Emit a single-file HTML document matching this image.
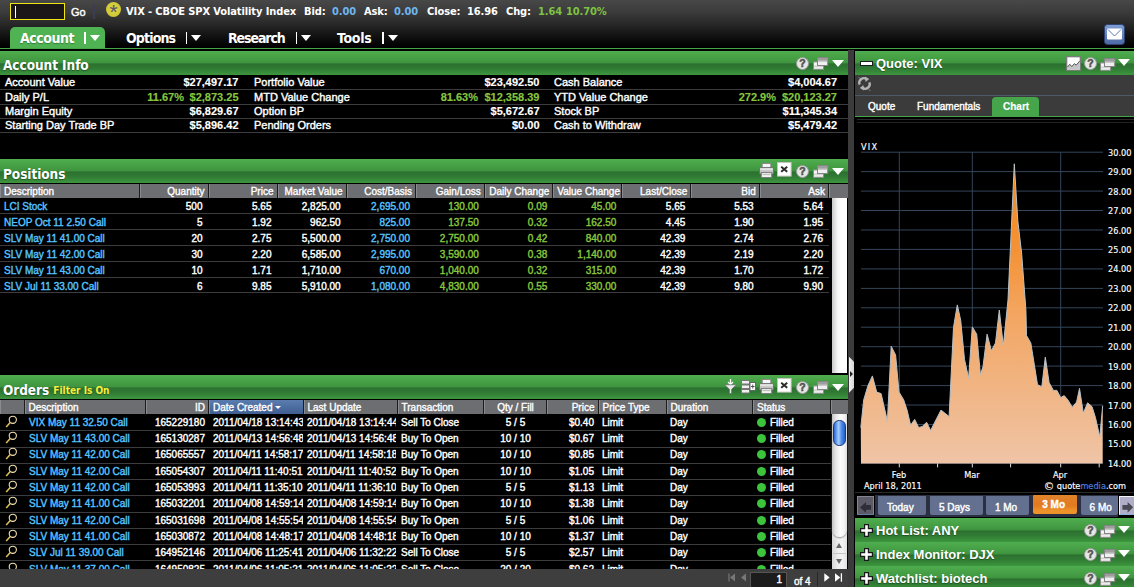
<!DOCTYPE html>
<html lang="en"><head><meta charset="utf-8"><title>Account</title>
<style>
*{margin:0;padding:0;box-sizing:border-box}
html,body{width:1134px;height:587px;overflow:hidden;background:#000}
body{position:relative;font-family:"Liberation Sans",sans-serif;font-size:11px;color:#fff;line-height:1}
.a{position:absolute;white-space:nowrap}
.t{position:absolute;white-space:nowrap;font-size:11px;line-height:14px;-webkit-text-stroke:0.4px currentColor}
.s{font-size:10px}
.b{font-weight:bold;-webkit-text-stroke-width:0.15px}
.r{text-align:right}
.g{color:#87c63f}
.bl{color:#55c2ff}
.hdr{position:absolute;height:24px;background:linear-gradient(#4fae4f 0%,#47a146 25%,#3f953f 49%,#2c7030 54%,#2f7a33 72%,#3d963e 100%)}
.ht{position:absolute;left:3px;top:5.5px;letter-spacing:-.05px;font-family:"DejaVu Sans Condensed","Liberation Sans",sans-serif;font-weight:bold;font-size:13.5px;line-height:18px;color:#fff;white-space:nowrap;text-shadow:0 1px 1px rgba(0,0,0,.35)}
.rh{position:absolute;font-weight:bold;font-size:13px;line-height:18px;color:#fff;white-space:nowrap;text-shadow:0 1px 1px rgba(0,0,0,.35)}
.ln{position:absolute;height:1px;background:#3c3c3c}
.ch{position:absolute;height:14px;background:#6d6e71;border-right:1px solid #1c1c1c;border-left:1px solid #8a8b8e;font-size:10px;line-height:15px;color:#fff;white-space:nowrap;overflow:hidden;-webkit-text-stroke:0.35px #fff}
svg{position:absolute;overflow:visible}
</style></head>
<body>
<div class="a" style="left:0;top:0;width:1134px;height:48px;background:linear-gradient(#484848 0,#3b3b3b 12px,#282828 24px,#151515 34px,#060606 43px,#000 48px)"></div>
<div class="a" style="left:10px;top:3px;width:55px;height:17px;border:1.3px solid #efe614;background:#1b1718"></div>
<div class="a" style="left:15px;top:6px;width:1px;height:12px;background:#fff"></div>
<div class="t" style="left:71px;top:4.5px;font-size:11px">Go</div>
<div class="a" style="left:93.2px;top:3.7px;width:1.8px;height:15px;background:#3c3c54"></div>
<div class="a" style="left:106px;top:2px;width:15.2px;height:15.2px;border-radius:8px;background:radial-gradient(circle at 50% 45%,#ddd644,#d2ca38 60%,#b9b12c)"></div>
<svg style="left:106px;top:2px" width="16" height="16" viewBox="0 0 16 16"><text x="7.7" y="17.1" text-anchor="middle" font-family="Liberation Sans,sans-serif" font-size="21" fill="#56566c">*</text></svg>
<div class="a" style="left:126px;top:4.7px;font-family:'DejaVu Sans Condensed','Liberation Sans',sans-serif;font-weight:bold;font-size:11px;letter-spacing:-0.1px;line-height:14px">VIX - CBOE SPX Volatility Index</div>
<div class="a" style="left:304px;top:4.7px;font-family:'DejaVu Sans Condensed','Liberation Sans',sans-serif;font-weight:bold;font-size:11px;letter-spacing:-0.1px;line-height:14px">Bid:</div>
<div class="a" style="left:332px;top:4.7px;font-family:'DejaVu Sans Condensed','Liberation Sans',sans-serif;font-weight:bold;font-size:11px;letter-spacing:-0.1px;line-height:14px;color:#6fb6f2">0.00</div>
<div class="a" style="left:364px;top:4.7px;font-family:'DejaVu Sans Condensed','Liberation Sans',sans-serif;font-weight:bold;font-size:11px;letter-spacing:-0.1px;line-height:14px">Ask:</div>
<div class="a" style="left:394px;top:4.7px;font-family:'DejaVu Sans Condensed','Liberation Sans',sans-serif;font-weight:bold;font-size:11px;letter-spacing:-0.1px;line-height:14px;color:#6fb6f2">0.00</div>
<div class="a" style="left:427px;top:4.7px;font-family:'DejaVu Sans Condensed','Liberation Sans',sans-serif;font-weight:bold;font-size:11px;letter-spacing:-0.1px;line-height:14px">Close:</div>
<div class="a" style="left:467px;top:4.7px;font-family:'DejaVu Sans Condensed','Liberation Sans',sans-serif;font-weight:bold;font-size:11px;letter-spacing:-0.1px;line-height:14px">16.96</div>
<div class="a" style="left:506px;top:4.7px;font-family:'DejaVu Sans Condensed','Liberation Sans',sans-serif;font-weight:bold;font-size:11px;letter-spacing:-0.1px;line-height:14px">Chg:</div>
<div class="a" style="left:538px;top:4.7px;font-family:'DejaVu Sans Condensed','Liberation Sans',sans-serif;font-weight:bold;font-size:11px;letter-spacing:-0.1px;line-height:14px;color:#7dc242">1.64</div>
<div class="a" style="left:566px;top:4.7px;font-family:'DejaVu Sans Condensed','Liberation Sans',sans-serif;font-weight:bold;font-size:11px;letter-spacing:-0.1px;line-height:14px;color:#7dc242">10.70%</div>
<div class="a" style="left:10px;top:27px;width:95px;height:22px;background:#4fb354;border-radius:5px 5px 0 0"></div>
<div class="a" style="left:20px;top:29px;font-family:'DejaVu Sans Condensed','Liberation Sans',sans-serif;font-weight:bold;font-size:14px;letter-spacing:-.5px;line-height:18px;text-shadow:0 1px 1px rgba(0,0,0,.3);letter-spacing:-0.45px">Account</div>
<div class="a" style="left:84px;top:31.5px;width:1.6px;height:12px;background:#fff"></div>
<div class="a" style="left:89.5px;top:35px;width:0;height:0;border-left:5px solid transparent;border-right:5px solid transparent;border-top:6px solid #fff"></div>
<div class="a" style="left:126px;top:29px;font-family:'DejaVu Sans Condensed','Liberation Sans',sans-serif;font-weight:bold;font-size:14px;letter-spacing:-.5px;line-height:18px;text-shadow:0 1px 1px rgba(0,0,0,.3);letter-spacing:-0.85px">Options</div>
<div class="a" style="left:185.5px;top:31.5px;width:1.6px;height:12px;background:#fff"></div>
<div class="a" style="left:191px;top:35px;width:0;height:0;border-left:5px solid transparent;border-right:5px solid transparent;border-top:6px solid #fff"></div>
<div class="a" style="left:228px;top:29px;font-family:'DejaVu Sans Condensed','Liberation Sans',sans-serif;font-weight:bold;font-size:14px;letter-spacing:-.5px;line-height:18px;text-shadow:0 1px 1px rgba(0,0,0,.3);letter-spacing:-1.1px">Research</div>
<div class="a" style="left:295.5px;top:31.5px;width:1.6px;height:12px;background:#fff"></div>
<div class="a" style="left:301px;top:35px;width:0;height:0;border-left:5px solid transparent;border-right:5px solid transparent;border-top:6px solid #fff"></div>
<div class="a" style="left:337px;top:29px;font-family:'DejaVu Sans Condensed','Liberation Sans',sans-serif;font-weight:bold;font-size:14px;letter-spacing:-.5px;line-height:18px;text-shadow:0 1px 1px rgba(0,0,0,.3);letter-spacing:-0.3px">Tools</div>
<div class="a" style="left:382px;top:31.5px;width:1.6px;height:12px;background:#fff"></div>
<div class="a" style="left:387.5px;top:35px;width:0;height:0;border-left:5px solid transparent;border-right:5px solid transparent;border-top:6px solid #fff"></div>
<div class="a" style="left:0;top:47.7px;width:1134px;height:1.5px;background:#46a44a"></div>
<svg style="left:1104px;top:24px" width="21" height="21" viewBox="0 0 21 21"><defs><linearGradient id="mg" x1="0" y1="0" x2="0" y2="1"><stop offset="0" stop-color="#7f9fd3"/><stop offset="1" stop-color="#4a69a6"/></linearGradient></defs><rect x="0.5" y="0.5" width="20" height="20" rx="3" fill="url(#mg)" stroke="#2d4270"/><rect x="3" y="4.5" width="15" height="11" rx="1" fill="#fff"/><path d="M4 5.5 L10.5 12 L17 5.5" fill="none" stroke="#5877b4" stroke-width="1"/></svg>
<div class="hdr" style="left:0;top:50.75px;height:24.25px;width:848px"><div class="ht" style="top:5px">Account Info</div></div>
<svg style="left:796px;top:57px" width="13" height="13" viewBox="0 0 13 13"><circle cx="6.5" cy="6.5" r="6" fill="#e6e6e6" stroke="#9a9a9a" stroke-width="1"/><text x="6.5" y="10" text-anchor="middle" font-family="Liberation Sans,sans-serif" font-weight="bold" font-size="10.5" fill="#505050" stroke="#505050" stroke-width=".5">?</text></svg>
<svg style="left:813px;top:56.5px" width="16" height="13" viewBox="0 0 16 13"><rect x="0.5" y="4.9" width="10" height="7.4" fill="#f4f4f4" stroke="#8c8c8c"/><rect x="1" y="8.6" width="9" height="1.6" fill="#d0d0d0"/><rect x="4.5" y="0.5" width="10.2" height="8" fill="#f0f0f0" stroke="#858585"/><rect x="5" y="1" width="9.2" height="2.8" fill="#9e9e9e"/><rect x="5" y="3.8" width="9.2" height="1.2" fill="#c8c8c8"/></svg>
<div class="a" style="left:832.4px;top:60.1px;width:0;height:0;border-left:6.1px solid transparent;border-right:6.1px solid transparent;border-top:7.6px solid #fff"></div>
<div class="t" style="left:5px;top:75px">Account Value</div>
<div class="t b r" style="left:138.5px;width:100px;top:75px">$27,497.17</div>
<div class="t" style="left:254px;top:75px">Portfolio Value</div>
<div class="t b r" style="left:439.5px;width:100px;top:75px">$23,492.50</div>
<div class="t" style="left:554px;top:75px">Cash Balance</div>
<div class="t b r" style="left:737px;width:100px;top:75px">$4,004.67</div>
<div class="ln" style="left:0;top:89px;width:848px"></div>
<div class="t" style="left:5px;top:90px">Daily P/L</div>
<div class="t b r g" style="left:138.5px;width:100px;top:90px">$2,873.25</div>
<div class="t b r g" style="left:124px;width:60px;top:90px">11.67%</div>
<div class="t" style="left:254px;top:90px">MTD Value Change</div>
<div class="t b r g" style="left:439.5px;width:100px;top:90px">$12,358.39</div>
<div class="t b r g" style="left:418px;width:60px;top:90px">81.63%</div>
<div class="t" style="left:554px;top:90px">YTD Value Change</div>
<div class="t b r g" style="left:737px;width:100px;top:90px">$20,123.27</div>
<div class="t b r g" style="left:716px;width:60px;top:90px">272.9%</div>
<div class="ln" style="left:0;top:104px;width:848px"></div>
<div class="t" style="left:5px;top:104px">Margin Equity</div>
<div class="t b r" style="left:138.5px;width:100px;top:104px">$6,829.67</div>
<div class="t" style="left:254px;top:104px">Option BP</div>
<div class="t b r" style="left:439.5px;width:100px;top:104px">$5,672.67</div>
<div class="t" style="left:554px;top:104px">Stock BP</div>
<div class="t b r" style="left:737px;width:100px;top:104px">$11,345.34</div>
<div class="ln" style="left:0;top:118px;width:848px"></div>
<div class="t" style="left:5px;top:118px">Starting Day Trade BP</div>
<div class="t b r" style="left:138.5px;width:100px;top:118px">$5,896.42</div>
<div class="t" style="left:254px;top:118px">Pending Orders</div>
<div class="t b r" style="left:439.5px;width:100px;top:118px">$0.00</div>
<div class="t" style="left:554px;top:118px">Cash to Withdraw</div>
<div class="t b r" style="left:737px;width:100px;top:118px">$5,479.42</div>
<div class="ln" style="left:0;top:132px;width:848px"></div>
<div class="hdr" style="left:0;top:159px;width:848px"><div class="ht">Positions</div></div>
<svg style="left:758.7px;top:163.2px" width="15" height="15" viewBox="0 0 15 15"><rect x="3.2" y="0.5" width="8.6" height="5" fill="#f6f6f6" stroke="#8a8a8a"/><rect x="0.5" y="4.6" width="14" height="6.4" rx="1.2" fill="#c4c4c4" stroke="#6f6f6f"/><rect x="1.2" y="5.2" width="12.6" height="2" fill="#e3e3e3"/><rect x="2.3" y="9.6" width="10.4" height="4.9" fill="#f2f2f2" stroke="#7c7c7c"/><path d="M3.5 11.6 H11.5" stroke="#aaa" stroke-width=".8"/></svg>
<svg style="left:776.9px;top:162.1px" width="15" height="15" viewBox="0 0 15 15"><rect x="0.5" y="0.5" width="13.6" height="13.6" fill="#fff" stroke="#c4c4c4"/><path d="M4.2 4.8 L10.2 9.8 M10.2 4.8 L4.2 9.8" stroke="#2c2c2c" stroke-width="2"/></svg>
<svg style="left:796px;top:165px" width="13" height="13" viewBox="0 0 13 13"><circle cx="6.5" cy="6.5" r="6" fill="#e6e6e6" stroke="#9a9a9a" stroke-width="1"/><text x="6.5" y="10" text-anchor="middle" font-family="Liberation Sans,sans-serif" font-weight="bold" font-size="10.5" fill="#505050" stroke="#505050" stroke-width=".5">?</text></svg>
<svg style="left:813px;top:164.5px" width="16" height="13" viewBox="0 0 16 13"><rect x="0.5" y="4.9" width="10" height="7.4" fill="#f4f4f4" stroke="#8c8c8c"/><rect x="1" y="8.6" width="9" height="1.6" fill="#d0d0d0"/><rect x="4.5" y="0.5" width="10.2" height="8" fill="#f0f0f0" stroke="#858585"/><rect x="5" y="1" width="9.2" height="2.8" fill="#9e9e9e"/><rect x="5" y="3.8" width="9.2" height="1.2" fill="#c8c8c8"/></svg>
<div class="a" style="left:832.4px;top:168.1px;width:0;height:0;border-left:6.1px solid transparent;border-right:6.1px solid transparent;border-top:7.6px solid #fff"></div>
<div class="ch" style="left:0px;top:184px;width:139.5px;text-align:left;padding:0 3px 0 3px">Description</div>
<div class="ch" style="left:139.5px;top:184px;width:69px;text-align:right;padding:0 3px 0 3px">Quantity</div>
<div class="ch" style="left:208.5px;top:184px;width:69px;text-align:right;padding:0 3px 0 3px">Price</div>
<div class="ch" style="left:277.5px;top:184px;width:69.2px;text-align:right;padding:0 3px 0 3px">Market Value</div>
<div class="ch" style="left:346.7px;top:184px;width:69.3px;text-align:right;padding:0 3px 0 3px">Cost/Basis</div>
<div class="ch" style="left:416px;top:184px;width:68.8px;text-align:right;padding:0 3px 0 3px">Gain/Loss</div>
<div class="ch" style="left:484.8px;top:184px;width:68.5px;text-align:right;padding:0 3px 0 3px">Daily Change</div>
<div class="ch" style="left:553.3px;top:184px;width:69px;text-align:right;padding:0 3px 0 3px">Value Change</div>
<div class="ch" style="left:622.3px;top:184px;width:69px;text-align:right;padding:0 3px 0 3px">Last/Close</div>
<div class="ch" style="left:691.3px;top:184px;width:68.4px;text-align:right;padding:0 3px 0 3px">Bid</div>
<div class="ch" style="left:759.7px;top:184px;width:69.3px;text-align:right;padding:0 3px 0 3px">Ask</div>
<div class="ch" style="left:829px;top:184px;width:19px;border-right:0"></div>
<div class="t s bl" style="left:4px;top:200.2px">LCI Stock</div>
<div class="t s r " style="left:122.5px;width:80px;top:200.2px">500</div>
<div class="t s r " style="left:191.5px;width:80px;top:200.2px">5.65</div>
<div class="t s r " style="left:260.7px;width:80px;top:200.2px">2,825.00</div>
<div class="t s r bl" style="left:330px;width:80px;top:200.2px">2,695.00</div>
<div class="t s r g" style="left:398.8px;width:80px;top:200.2px">130.00</div>
<div class="t s r g" style="left:467.3px;width:80px;top:200.2px">0.09</div>
<div class="t s r g" style="left:536.3px;width:80px;top:200.2px">45.00</div>
<div class="t s r " style="left:605.3px;width:80px;top:200.2px">5.65</div>
<div class="t s r " style="left:673.7px;width:80px;top:200.2px">5.53</div>
<div class="t s r " style="left:743px;width:80px;top:200.2px">5.64</div>
<div class="ln" style="left:0;top:213px;width:829px"></div>
<div class="t s bl" style="left:4px;top:216.1px">NEOP Oct 11 2.50 Call</div>
<div class="t s r " style="left:122.5px;width:80px;top:216.1px">5</div>
<div class="t s r " style="left:191.5px;width:80px;top:216.1px">1.92</div>
<div class="t s r " style="left:260.7px;width:80px;top:216.1px">962.50</div>
<div class="t s r bl" style="left:330px;width:80px;top:216.1px">825.00</div>
<div class="t s r g" style="left:398.8px;width:80px;top:216.1px">137.50</div>
<div class="t s r g" style="left:467.3px;width:80px;top:216.1px">0.32</div>
<div class="t s r g" style="left:536.3px;width:80px;top:216.1px">162.50</div>
<div class="t s r " style="left:605.3px;width:80px;top:216.1px">4.45</div>
<div class="t s r " style="left:673.7px;width:80px;top:216.1px">1.90</div>
<div class="t s r " style="left:743px;width:80px;top:216.1px">1.95</div>
<div class="ln" style="left:0;top:229px;width:829px"></div>
<div class="t s bl" style="left:4px;top:232px">SLV May 11 41.00 Call</div>
<div class="t s r " style="left:122.5px;width:80px;top:232px">20</div>
<div class="t s r " style="left:191.5px;width:80px;top:232px">2.75</div>
<div class="t s r " style="left:260.7px;width:80px;top:232px">5,500.00</div>
<div class="t s r bl" style="left:330px;width:80px;top:232px">2,750.00</div>
<div class="t s r g" style="left:398.8px;width:80px;top:232px">2,750.00</div>
<div class="t s r g" style="left:467.3px;width:80px;top:232px">0.42</div>
<div class="t s r g" style="left:536.3px;width:80px;top:232px">840.00</div>
<div class="t s r " style="left:605.3px;width:80px;top:232px">42.39</div>
<div class="t s r " style="left:673.7px;width:80px;top:232px">2.74</div>
<div class="t s r " style="left:743px;width:80px;top:232px">2.76</div>
<div class="ln" style="left:0;top:245px;width:829px"></div>
<div class="t s bl" style="left:4px;top:247.9px">SLV May 11 42.00 Call</div>
<div class="t s r " style="left:122.5px;width:80px;top:247.9px">30</div>
<div class="t s r " style="left:191.5px;width:80px;top:247.9px">2.20</div>
<div class="t s r " style="left:260.7px;width:80px;top:247.9px">6,585.00</div>
<div class="t s r bl" style="left:330px;width:80px;top:247.9px">2,995.00</div>
<div class="t s r g" style="left:398.8px;width:80px;top:247.9px">3,590.00</div>
<div class="t s r g" style="left:467.3px;width:80px;top:247.9px">0.38</div>
<div class="t s r g" style="left:536.3px;width:80px;top:247.9px">1,140.00</div>
<div class="t s r " style="left:605.3px;width:80px;top:247.9px">42.39</div>
<div class="t s r " style="left:673.7px;width:80px;top:247.9px">2.19</div>
<div class="t s r " style="left:743px;width:80px;top:247.9px">2.20</div>
<div class="ln" style="left:0;top:261px;width:829px"></div>
<div class="t s bl" style="left:4px;top:263.8px">SLV May 11 43.00 Call</div>
<div class="t s r " style="left:122.5px;width:80px;top:263.8px">10</div>
<div class="t s r " style="left:191.5px;width:80px;top:263.8px">1.71</div>
<div class="t s r " style="left:260.7px;width:80px;top:263.8px">1,710.00</div>
<div class="t s r bl" style="left:330px;width:80px;top:263.8px">670.00</div>
<div class="t s r g" style="left:398.8px;width:80px;top:263.8px">1,040.00</div>
<div class="t s r g" style="left:467.3px;width:80px;top:263.8px">0.32</div>
<div class="t s r g" style="left:536.3px;width:80px;top:263.8px">315.00</div>
<div class="t s r " style="left:605.3px;width:80px;top:263.8px">42.39</div>
<div class="t s r " style="left:673.7px;width:80px;top:263.8px">1.70</div>
<div class="t s r " style="left:743px;width:80px;top:263.8px">1.72</div>
<div class="ln" style="left:0;top:277px;width:829px"></div>
<div class="t s bl" style="left:4px;top:279.7px">SLV Jul 11 33.00 Call</div>
<div class="t s r " style="left:122.5px;width:80px;top:279.7px">6</div>
<div class="t s r " style="left:191.5px;width:80px;top:279.7px">9.85</div>
<div class="t s r " style="left:260.7px;width:80px;top:279.7px">5,910.00</div>
<div class="t s r bl" style="left:330px;width:80px;top:279.7px">1,080.00</div>
<div class="t s r g" style="left:398.8px;width:80px;top:279.7px">4,830.00</div>
<div class="t s r g" style="left:467.3px;width:80px;top:279.7px">0.55</div>
<div class="t s r g" style="left:536.3px;width:80px;top:279.7px">330.00</div>
<div class="t s r " style="left:605.3px;width:80px;top:279.7px">42.39</div>
<div class="t s r " style="left:673.7px;width:80px;top:279.7px">9.80</div>
<div class="t s r " style="left:743px;width:80px;top:279.7px">9.90</div>
<div class="ln" style="left:0;top:292px;width:829px"></div>
<div class="a" style="left:832px;top:198px;width:15px;height:175px;background:linear-gradient(90deg,#c8c8c8,#f4f4f4 35%,#fff 60%,#fff)"></div>
<div class="hdr" style="left:0;top:375px;width:848px"><div class="ht">Orders <span style="font-size:10px;letter-spacing:0;color:#f5ef3c;position:relative;top:-0.5px;left:0px">Filter Is On</span></div></div>
<svg style="left:758.7px;top:379.2px" width="15" height="15" viewBox="0 0 15 15"><rect x="3.2" y="0.5" width="8.6" height="5" fill="#f6f6f6" stroke="#8a8a8a"/><rect x="0.5" y="4.6" width="14" height="6.4" rx="1.2" fill="#c4c4c4" stroke="#6f6f6f"/><rect x="1.2" y="5.2" width="12.6" height="2" fill="#e3e3e3"/><rect x="2.3" y="9.6" width="10.4" height="4.9" fill="#f2f2f2" stroke="#7c7c7c"/><path d="M3.5 11.6 H11.5" stroke="#aaa" stroke-width=".8"/></svg>
<svg style="left:776.9px;top:378.1px" width="15" height="15" viewBox="0 0 15 15"><rect x="0.5" y="0.5" width="13.6" height="13.6" fill="#fff" stroke="#c4c4c4"/><path d="M4.2 4.8 L10.2 9.8 M10.2 4.8 L4.2 9.8" stroke="#2c2c2c" stroke-width="2"/></svg>
<svg style="left:796px;top:381px" width="13" height="13" viewBox="0 0 13 13"><circle cx="6.5" cy="6.5" r="6" fill="#e6e6e6" stroke="#9a9a9a" stroke-width="1"/><text x="6.5" y="10" text-anchor="middle" font-family="Liberation Sans,sans-serif" font-weight="bold" font-size="10.5" fill="#505050" stroke="#505050" stroke-width=".5">?</text></svg>
<svg style="left:813px;top:380.5px" width="16" height="13" viewBox="0 0 16 13"><rect x="0.5" y="4.9" width="10" height="7.4" fill="#f4f4f4" stroke="#8c8c8c"/><rect x="1" y="8.6" width="9" height="1.6" fill="#d0d0d0"/><rect x="4.5" y="0.5" width="10.2" height="8" fill="#f0f0f0" stroke="#858585"/><rect x="5" y="1" width="9.2" height="2.8" fill="#9e9e9e"/><rect x="5" y="3.8" width="9.2" height="1.2" fill="#c8c8c8"/></svg>
<div class="a" style="left:832.4px;top:384.1px;width:0;height:0;border-left:6.1px solid transparent;border-right:6.1px solid transparent;border-top:7.6px solid #fff"></div>
<svg style="left:724px;top:379px" width="13" height="15" viewBox="0 0 13 15"><path d="M6.5 0 V5 M4 3 L6.5 5.6 L9 3" stroke="#fff" stroke-width="1.3" fill="none"/><path d="M0.5 5.8 H12.5 L7.6 10.2 V14.5 H5.4 V10.2 Z" fill="#ececec" stroke="#666" stroke-width=".7"/></svg>
<svg style="left:741px;top:380px" width="15" height="14" viewBox="0 0 15 14"><rect x="0.5" y="0.5" width="8" height="3.5" fill="#f0f0f0" stroke="#777"/><rect x="0.5" y="5" width="8" height="3.5" fill="#f0f0f0" stroke="#777"/><rect x="0.5" y="9.5" width="8" height="3.5" fill="#f0f0f0" stroke="#777"/><rect x="9" y="2.5" width="5.5" height="8" fill="#fff" stroke="#666"/><path d="M10 6.5 H13.5 M11.75 4.5 V8.5" stroke="#444" stroke-width=".9"/></svg>
<div class="ch" style="left:0px;top:400px;width:24.5px;text-align:left;padding:0 3px 0 3px"></div>
<div class="ch" style="left:24.5px;top:400px;width:121px;text-align:left;padding:0 3px 0 3px">Description</div>
<div class="ch" style="left:145.5px;top:400px;width:63.5px;text-align:right;padding:0 3px 0 3px">ID</div>
<div class="ch" style="left:209px;top:400px;width:94.5px;text-align:left;padding:0 3px 0 3px;background:linear-gradient(#5b7cae,#3f5f93)">Date Created <span style="display:inline-block;width:0;height:0;border-left:3px solid transparent;border-right:3px solid transparent;border-top:3.5px solid #fff;vertical-align:middle;position:relative;top:-1px"></span></div>
<div class="ch" style="left:303.5px;top:400px;width:94px;text-align:left;padding:0 3px 0 3px">Last Update</div>
<div class="ch" style="left:397.5px;top:400px;width:86.5px;text-align:left;padding:0 3px 0 3px">Transaction</div>
<div class="ch" style="left:484px;top:400px;width:63px;text-align:center;padding:0 3px 0 3px">Qty / Fill</div>
<div class="ch" style="left:547px;top:400px;width:51.5px;text-align:right;padding:0 3px 0 3px">Price</div>
<div class="ch" style="left:598.5px;top:400px;width:68px;text-align:left;padding:0 3px 0 3px">Price Type</div>
<div class="ch" style="left:666.5px;top:400px;width:86.5px;text-align:left;padding:0 3px 0 3px">Duration</div>
<div class="ch" style="left:753px;top:400px;width:78px;text-align:left;padding:0 3px 0 3px">Status</div>
<div class="ch" style="left:831px;top:400px;width:17px;border-right:0"></div>
<div class="a" style="left:0;top:414px;width:831px;height:156px;overflow:hidden">
<svg style="left:5px;top:1.4px" width="13" height="13" viewBox="0 0 13 13"><circle cx="7.8" cy="4.8" r="3.6" fill="none" stroke="#f3e2b0" stroke-width="1.1"/><path d="M5.2 7.6 L1.2 12" stroke="#e6c060" stroke-width="1.5"/></svg>
<div class="t s bl" style="left:29px;top:2px">VIX May 11 32.50 Call</div>
<div class="t s r" style="left:135px;width:70px;top:2px">165229180</div>
<div class="t s" style="left:213px;top:2px;width:89.5px;overflow:hidden">2011/04/18 13:14:43</div>
<div class="t s" style="left:307px;top:2px;width:89px;overflow:hidden">2011/04/18 13:14:44</div>
<div class="t s" style="left:401px;top:2px">Sell To Close</div>
<div class="t s" style="left:484px;width:63px;text-align:center;top:2px">5 / 5</div>
<div class="t s r" style="left:544px;width:50px;top:2px">$0.40</div>
<div class="t s" style="left:602px;top:2px">Limit</div>
<div class="t s" style="left:670px;top:2px">Day</div>
<div class="a" style="left:757px;top:4.2px;width:8.5px;height:8.5px;border-radius:5px;background:#3dc43d"></div>
<div class="t s" style="left:770px;top:2px">Filled</div>
<div class="ln" style="left:0;top:16px;width:831px"></div>
<svg style="left:5px;top:17.4px" width="13" height="13" viewBox="0 0 13 13"><circle cx="7.8" cy="4.8" r="3.6" fill="none" stroke="#f3e2b0" stroke-width="1.1"/><path d="M5.2 7.6 L1.2 12" stroke="#e6c060" stroke-width="1.5"/></svg>
<div class="t s bl" style="left:29px;top:18px">SLV May 11 43.00 Call</div>
<div class="t s r" style="left:135px;width:70px;top:18px">165130287</div>
<div class="t s" style="left:213px;top:18px;width:89.5px;overflow:hidden">2011/04/13 14:56:48</div>
<div class="t s" style="left:307px;top:18px;width:89px;overflow:hidden">2011/04/13 14:56:48</div>
<div class="t s" style="left:401px;top:18px">Buy To Open</div>
<div class="t s" style="left:484px;width:63px;text-align:center;top:18px">10 / 10</div>
<div class="t s r" style="left:544px;width:50px;top:18px">$0.67</div>
<div class="t s" style="left:602px;top:18px">Limit</div>
<div class="t s" style="left:670px;top:18px">Day</div>
<div class="a" style="left:757px;top:20.2px;width:8.5px;height:8.5px;border-radius:5px;background:#3dc43d"></div>
<div class="t s" style="left:770px;top:18px">Filled</div>
<div class="ln" style="left:0;top:33px;width:831px"></div>
<svg style="left:5px;top:33.4px" width="13" height="13" viewBox="0 0 13 13"><circle cx="7.8" cy="4.8" r="3.6" fill="none" stroke="#f3e2b0" stroke-width="1.1"/><path d="M5.2 7.6 L1.2 12" stroke="#e6c060" stroke-width="1.5"/></svg>
<div class="t s bl" style="left:29px;top:34px">SLV May 11 42.00 Call</div>
<div class="t s r" style="left:135px;width:70px;top:34px">165065557</div>
<div class="t s" style="left:213px;top:34px;width:89.5px;overflow:hidden">2011/04/11 14:58:17</div>
<div class="t s" style="left:307px;top:34px;width:89px;overflow:hidden">2011/04/11 14:58:18</div>
<div class="t s" style="left:401px;top:34px">Buy To Open</div>
<div class="t s" style="left:484px;width:63px;text-align:center;top:34px">10 / 10</div>
<div class="t s r" style="left:544px;width:50px;top:34px">$0.85</div>
<div class="t s" style="left:602px;top:34px">Limit</div>
<div class="t s" style="left:670px;top:34px">Day</div>
<div class="a" style="left:757px;top:36.2px;width:8.5px;height:8.5px;border-radius:5px;background:#3dc43d"></div>
<div class="t s" style="left:770px;top:34px">Filled</div>
<div class="ln" style="left:0;top:49px;width:831px"></div>
<svg style="left:5px;top:50.4px" width="13" height="13" viewBox="0 0 13 13"><circle cx="7.8" cy="4.8" r="3.6" fill="none" stroke="#f3e2b0" stroke-width="1.1"/><path d="M5.2 7.6 L1.2 12" stroke="#e6c060" stroke-width="1.5"/></svg>
<div class="t s bl" style="left:29px;top:51px">SLV May 11 42.00 Call</div>
<div class="t s r" style="left:135px;width:70px;top:51px">165054307</div>
<div class="t s" style="left:213px;top:51px;width:89.5px;overflow:hidden">2011/04/11 11:40:51</div>
<div class="t s" style="left:307px;top:51px;width:89px;overflow:hidden">2011/04/11 11:40:52</div>
<div class="t s" style="left:401px;top:51px">Buy To Open</div>
<div class="t s" style="left:484px;width:63px;text-align:center;top:51px">10 / 10</div>
<div class="t s r" style="left:544px;width:50px;top:51px">$1.05</div>
<div class="t s" style="left:602px;top:51px">Limit</div>
<div class="t s" style="left:670px;top:51px">Day</div>
<div class="a" style="left:757px;top:53.2px;width:8.5px;height:8.5px;border-radius:5px;background:#3dc43d"></div>
<div class="t s" style="left:770px;top:51px">Filled</div>
<div class="ln" style="left:0;top:65px;width:831px"></div>
<svg style="left:5px;top:66.4px" width="13" height="13" viewBox="0 0 13 13"><circle cx="7.8" cy="4.8" r="3.6" fill="none" stroke="#f3e2b0" stroke-width="1.1"/><path d="M5.2 7.6 L1.2 12" stroke="#e6c060" stroke-width="1.5"/></svg>
<div class="t s bl" style="left:29px;top:67px">SLV May 11 42.00 Call</div>
<div class="t s r" style="left:135px;width:70px;top:67px">165053993</div>
<div class="t s" style="left:213px;top:67px;width:89.5px;overflow:hidden">2011/04/11 11:35:10</div>
<div class="t s" style="left:307px;top:67px;width:89px;overflow:hidden">2011/04/11 11:36:10</div>
<div class="t s" style="left:401px;top:67px">Buy To Open</div>
<div class="t s" style="left:484px;width:63px;text-align:center;top:67px">5 / 5</div>
<div class="t s r" style="left:544px;width:50px;top:67px">$1.13</div>
<div class="t s" style="left:602px;top:67px">Limit</div>
<div class="t s" style="left:670px;top:67px">Day</div>
<div class="a" style="left:757px;top:69.2px;width:8.5px;height:8.5px;border-radius:5px;background:#3dc43d"></div>
<div class="t s" style="left:770px;top:67px">Filled</div>
<div class="ln" style="left:0;top:81px;width:831px"></div>
<svg style="left:5px;top:82.4px" width="13" height="13" viewBox="0 0 13 13"><circle cx="7.8" cy="4.8" r="3.6" fill="none" stroke="#f3e2b0" stroke-width="1.1"/><path d="M5.2 7.6 L1.2 12" stroke="#e6c060" stroke-width="1.5"/></svg>
<div class="t s bl" style="left:29px;top:83px">SLV May 11 41.00 Call</div>
<div class="t s r" style="left:135px;width:70px;top:83px">165032201</div>
<div class="t s" style="left:213px;top:83px;width:89.5px;overflow:hidden">2011/04/08 14:59:14</div>
<div class="t s" style="left:307px;top:83px;width:89px;overflow:hidden">2011/04/08 14:59:14</div>
<div class="t s" style="left:401px;top:83px">Buy To Open</div>
<div class="t s" style="left:484px;width:63px;text-align:center;top:83px">10 / 10</div>
<div class="t s r" style="left:544px;width:50px;top:83px">$1.38</div>
<div class="t s" style="left:602px;top:83px">Limit</div>
<div class="t s" style="left:670px;top:83px">Day</div>
<div class="a" style="left:757px;top:85.2px;width:8.5px;height:8.5px;border-radius:5px;background:#3dc43d"></div>
<div class="t s" style="left:770px;top:83px">Filled</div>
<div class="ln" style="left:0;top:98px;width:831px"></div>
<svg style="left:5px;top:99.4px" width="13" height="13" viewBox="0 0 13 13"><circle cx="7.8" cy="4.8" r="3.6" fill="none" stroke="#f3e2b0" stroke-width="1.1"/><path d="M5.2 7.6 L1.2 12" stroke="#e6c060" stroke-width="1.5"/></svg>
<div class="t s bl" style="left:29px;top:100px">SLV May 11 42.00 Call</div>
<div class="t s r" style="left:135px;width:70px;top:100px">165031698</div>
<div class="t s" style="left:213px;top:100px;width:89.5px;overflow:hidden">2011/04/08 14:55:54</div>
<div class="t s" style="left:307px;top:100px;width:89px;overflow:hidden">2011/04/08 14:55:54</div>
<div class="t s" style="left:401px;top:100px">Buy To Open</div>
<div class="t s" style="left:484px;width:63px;text-align:center;top:100px">5 / 5</div>
<div class="t s r" style="left:544px;width:50px;top:100px">$1.06</div>
<div class="t s" style="left:602px;top:100px">Limit</div>
<div class="t s" style="left:670px;top:100px">Day</div>
<div class="a" style="left:757px;top:102.2px;width:8.5px;height:8.5px;border-radius:5px;background:#3dc43d"></div>
<div class="t s" style="left:770px;top:100px">Filled</div>
<div class="ln" style="left:0;top:114px;width:831px"></div>
<svg style="left:5px;top:115.4px" width="13" height="13" viewBox="0 0 13 13"><circle cx="7.8" cy="4.8" r="3.6" fill="none" stroke="#f3e2b0" stroke-width="1.1"/><path d="M5.2 7.6 L1.2 12" stroke="#e6c060" stroke-width="1.5"/></svg>
<div class="t s bl" style="left:29px;top:116px">SLV May 11 41.00 Call</div>
<div class="t s r" style="left:135px;width:70px;top:116px">165030872</div>
<div class="t s" style="left:213px;top:116px;width:89.5px;overflow:hidden">2011/04/08 14:48:17</div>
<div class="t s" style="left:307px;top:116px;width:89px;overflow:hidden">2011/04/08 14:48:18</div>
<div class="t s" style="left:401px;top:116px">Buy To Open</div>
<div class="t s" style="left:484px;width:63px;text-align:center;top:116px">10 / 10</div>
<div class="t s r" style="left:544px;width:50px;top:116px">$1.37</div>
<div class="t s" style="left:602px;top:116px">Limit</div>
<div class="t s" style="left:670px;top:116px">Day</div>
<div class="a" style="left:757px;top:118.2px;width:8.5px;height:8.5px;border-radius:5px;background:#3dc43d"></div>
<div class="t s" style="left:770px;top:116px">Filled</div>
<div class="ln" style="left:0;top:130px;width:831px"></div>
<svg style="left:5px;top:131.4px" width="13" height="13" viewBox="0 0 13 13"><circle cx="7.8" cy="4.8" r="3.6" fill="none" stroke="#f3e2b0" stroke-width="1.1"/><path d="M5.2 7.6 L1.2 12" stroke="#e6c060" stroke-width="1.5"/></svg>
<div class="t s bl" style="left:29px;top:132px">SLV Jul 11 39.00 Call</div>
<div class="t s r" style="left:135px;width:70px;top:132px">164952146</div>
<div class="t s" style="left:213px;top:132px;width:89.5px;overflow:hidden">2011/04/06 11:25:41</div>
<div class="t s" style="left:307px;top:132px;width:89px;overflow:hidden">2011/04/06 11:32:22</div>
<div class="t s" style="left:401px;top:132px">Sell To Close</div>
<div class="t s" style="left:484px;width:63px;text-align:center;top:132px">5 / 5</div>
<div class="t s r" style="left:544px;width:50px;top:132px">$2.57</div>
<div class="t s" style="left:602px;top:132px">Limit</div>
<div class="t s" style="left:670px;top:132px">Day</div>
<div class="a" style="left:757px;top:134.2px;width:8.5px;height:8.5px;border-radius:5px;background:#3dc43d"></div>
<div class="t s" style="left:770px;top:132px">Filled</div>
<div class="ln" style="left:0;top:146px;width:831px"></div>
<svg style="left:5px;top:148.4px" width="13" height="13" viewBox="0 0 13 13"><circle cx="7.8" cy="4.8" r="3.6" fill="none" stroke="#f3e2b0" stroke-width="1.1"/><path d="M5.2 7.6 L1.2 12" stroke="#e6c060" stroke-width="1.5"/></svg>
<div class="t s bl" style="left:29px;top:149px">SLV May 11 37.00 Call</div>
<div class="t s r" style="left:135px;width:70px;top:149px">164950825</div>
<div class="t s" style="left:213px;top:149px;width:89.5px;overflow:hidden">2011/04/06 11:05:21</div>
<div class="t s" style="left:307px;top:149px;width:89px;overflow:hidden">2011/04/06 11:05:22</div>
<div class="t s" style="left:401px;top:149px">Sell To Close</div>
<div class="t s" style="left:484px;width:63px;text-align:center;top:149px">20 / 20</div>
<div class="t s r" style="left:544px;width:50px;top:149px">$0.62</div>
<div class="t s" style="left:602px;top:149px">Limit</div>
<div class="t s" style="left:670px;top:149px">Day</div>
<div class="a" style="left:757px;top:151.2px;width:8.5px;height:8.5px;border-radius:5px;background:#3dc43d"></div>
<div class="t s" style="left:770px;top:149px">Filled</div>
<div class="ln" style="left:0;top:162px;width:831px"></div>
</div>
<div class="a" style="left:832px;top:528px;width:15px;height:42px;background:linear-gradient(90deg,#d6d6d6,#efefef 40%,#f2f2f2 70%,#e2e2e2)"></div>
<div class="a" style="left:832px;top:414px;width:15px;height:123px;background:linear-gradient(90deg,#c2c2c2,#e6e6e6 25%,#fbfbfb 55%,#f4f4f4 80%,#dedede);border-radius:0 0 7.5px 7.5px;box-shadow:0 1px 1.5px #8e8e8e"></div>
<div class="a" style="left:833.4px;top:419.6px;width:12.2px;height:26.4px;border-radius:6.1px;background:linear-gradient(90deg,#2a66cc,#7fb2f7 30%,#a5ccff 42%,#4b8cec 68%,#245fc4);border:1px solid #1b3a7e"></div>
<div class="a" style="left:836px;top:542.5px;width:0;height:0;border-left:3.6px solid transparent;border-right:3.6px solid transparent;border-bottom:5px solid #6a6a6a"></div>
<div class="a" style="left:836px;top:558.5px;width:0;height:0;border-left:3.6px solid transparent;border-right:3.6px solid transparent;border-top:5px solid #6a6a6a"></div>
<div class="a" style="left:833px;top:552.5px;width:13px;height:1px;background:#c6c6c6"></div>
<div class="a" style="left:0;top:569.3px;width:848px;height:18px;background:#3e3e3e"></div>
<div class="a" style="left:749.5px;top:571.5px;width:37.5px;height:16px;background:#1c1c1c;border:1px solid #565656"></div>
<div class="t s" style="left:751px;width:31px;text-align:right;top:573px">1</div>
<div class="t s" style="left:794px;top:574.8px">of 4</div>
<div class="a" style="left:816.5px;top:572px;width:1px;height:14px;background:#26262e"></div>
<svg style="left:727px;top:572px" width="120" height="12" viewBox="0 0 120 12"><path d="M2 1.5 V9.5" stroke="#777" stroke-width="1.2"/><path d="M8 1.5 V9.5 L3 5.5 Z" fill="#777"/><path d="M19 1.5 V9.5 L14 5.5 Z" fill="#777"/><path d="M97.3 1.3 V9.7 L102.6 5.5 Z" fill="#fff"/><path d="M108 1.3 V9.7 L113.3 5.5 Z" fill="#fff"/><path d="M114.4 1.3 V9.7" stroke="#fff" stroke-width="1.3"/></svg>
<div class="a" style="left:848px;top:49.5px;width:5.8px;height:538px;background:#3b3b3b"></div>
<div class="a" style="left:849px;top:356.7px;width:5px;height:36px;background:linear-gradient(90deg,#f2f2f2,#d4d4d4);clip-path:polygon(0 0,100% 14%,100% 86%,0 100%)"></div>
<div class="a" style="left:850px;top:371px;width:0;height:0;border-top:3px solid transparent;border-bottom:3px solid transparent;border-left:3px solid #222"></div>
<div class="hdr" style="left:855px;top:51px;width:279px"></div>
<div class="a" style="left:861px;top:62px;width:11px;height:3px;background:#fff;box-shadow:0 0 0 1px #1c1c1c"></div>
<div class="rh" style="left:876px;top:55px">Quote: VIX</div>
<svg style="left:1066px;top:56px" width="15" height="15" viewBox="0 0 15 15"><rect x="0.7" y="0.7" width="13.6" height="13.6" fill="#fff" stroke="#777" stroke-width="1.2"/><path d="M1.3 11.2 L3.8 8.3 L5.8 10.6 L8.4 7.6 L10.2 9.2 L13.7 5 V13.7 H1.3 Z" fill="#c6c6c6"/><path d="M1.3 11.2 L3.8 8.3 L5.8 10.6 L8.4 7.6 L10.2 9.2 L13.7 5" fill="none" stroke="#555" stroke-width="1"/></svg>
<svg style="left:1084px;top:56.6px" width="13" height="13" viewBox="0 0 13 13"><circle cx="6.5" cy="6.5" r="6" fill="#e6e6e6" stroke="#9a9a9a" stroke-width="1"/><text x="6.5" y="10" text-anchor="middle" font-family="Liberation Sans,sans-serif" font-weight="bold" font-size="10.5" fill="#505050" stroke="#505050" stroke-width=".5">?</text></svg>
<svg style="left:1100.2px;top:57.8px" width="16" height="13" viewBox="0 0 16 13"><rect x="0.5" y="4.9" width="10" height="7.4" fill="#f4f4f4" stroke="#8c8c8c"/><rect x="1" y="8.6" width="9" height="1.6" fill="#d0d0d0"/><rect x="4.5" y="0.5" width="10.2" height="8" fill="#f0f0f0" stroke="#858585"/><rect x="5" y="1" width="9.2" height="2.8" fill="#9e9e9e"/><rect x="5" y="3.8" width="9.2" height="1.2" fill="#c8c8c8"/></svg>
<div class="a" style="left:1118px;top:58.8px;width:0;height:0;border-left:6.1px solid transparent;border-right:6.1px solid transparent;border-top:7.6px solid #fff"></div>
<div class="a" style="left:855px;top:75px;width:279px;height:20px;background:#3b3b3b"></div>
<svg style="left:857px;top:76px" width="15" height="15" viewBox="0 0 15 15"><path d="M2.6 8.6 A4.6 4.6 0 0 1 9.6 3.2" fill="none" stroke="#b4b4b4" stroke-width="2.3"/><path d="M8 0.6 L12.2 3 L8.6 6 Z" fill="#b4b4b4"/><path d="M12.4 6.4 A4.6 4.6 0 0 1 5.4 11.8" fill="none" stroke="#b4b4b4" stroke-width="2.3"/><path d="M7 14.4 L2.8 12 L6.4 9 Z" fill="#b4b4b4"/><path d="M2 1.5 l1.2 1.2 M12 13.6 l1 1" stroke="#ddd" stroke-width=".8"/></svg>
<div class="a" style="left:855px;top:95px;width:279px;height:22px;background:#3b3b3b;border-top:1px solid #4e5a6a;border-bottom:1px solid #46a44a"></div>
<div class="a" style="left:992px;top:97px;width:46.5px;height:20px;background:#46a44a;border-radius:4px 4px 0 0"></div>
<div class="t s" style="left:868px;top:99.5px">Quote</div>
<div class="t s" style="left:917px;top:99.5px">Fundamentals</div>
<div class="t s b" style="left:1003px;top:99.5px">Chart</div>
<div class="a" style="left:857px;top:119px;width:277px;height:1px;background:#2a2a2a"></div>
<div class="a" style="left:857px;top:122px;width:277px;height:1px;background:#222"></div>
<svg style="left:0;top:0" width="1134" height="587" viewBox="0 0 1134 587"><defs><linearGradient id="cg" gradientUnits="userSpaceOnUse" x1="0" y1="160" x2="0" y2="463"><stop offset="0" stop-color="#f6871a"/><stop offset="0.3" stop-color="#f49236"/><stop offset="0.5" stop-color="#f3a560"/><stop offset="1" stop-color="#efc4a6"/></linearGradient></defs><path d="M861 152.2 H1103" stroke="#34465a" stroke-width="1"/><path d="M861 171.6 H1103" stroke="#34465a" stroke-width="1"/><path d="M861 191.1 H1103" stroke="#34465a" stroke-width="1"/><path d="M861 210.5 H1103" stroke="#34465a" stroke-width="1"/><path d="M861 230.0 H1103" stroke="#34465a" stroke-width="1"/><path d="M861 249.4 H1103" stroke="#34465a" stroke-width="1"/><path d="M861 268.9 H1103" stroke="#34465a" stroke-width="1"/><path d="M861 288.4 H1103" stroke="#34465a" stroke-width="1"/><path d="M861 307.8 H1103" stroke="#34465a" stroke-width="1"/><path d="M861 327.2 H1103" stroke="#34465a" stroke-width="1"/><path d="M861 346.7 H1103" stroke="#34465a" stroke-width="1"/><path d="M861 366.1 H1103" stroke="#34465a" stroke-width="1"/><path d="M861 385.6 H1103" stroke="#34465a" stroke-width="1"/><path d="M861 405.0 H1103" stroke="#34465a" stroke-width="1"/><path d="M861 424.5 H1103" stroke="#34465a" stroke-width="1"/><path d="M861 443.9 H1103" stroke="#34465a" stroke-width="1"/><path d="M861 463.4 H1103" stroke="#34465a" stroke-width="1"/><path d="M899.3 152.2 V463.4" stroke="#34465a" stroke-width="1"/><path d="M972.3 152.2 V463.4" stroke="#34465a" stroke-width="1"/><path d="M1060.7 152.2 V463.4" stroke="#34465a" stroke-width="1"/><path d="M861.0 463.4 L860.8 427.5 L863.7 399.9 L868.0 385.5 L872.4 375.9 L876.7 392.1 L881.1 393.6 L887.4 421.1 L891.2 346.3 L895.6 355.0 L899.0 392.1 L903.7 399.9 L907.1 410.1 L910.6 425.1 L914.7 419.4 L918.7 427.5 L922.2 426.6 L926.6 422.2 L930.6 430.4 L941.0 410.1 L949.1 416.5 L953.5 327.5 L957.3 304.9 L960.7 320.3 L964.5 359.4 L968.6 378.2 L972.3 326.9 L976.7 334.2 L980.4 374.7 L983.0 366.6 L987.1 334.2 L991.4 350.7 L995.5 342.9 L999.3 310.1 L1003.3 345.8 L1008.0 300.0 L1011.4 226.9 L1014.3 163.8 L1017.8 221.1 L1021.6 253.0 L1025.9 310.0 L1026.5 335.6 L1030.8 342.9 L1037.5 384.6 L1041.8 386.9 L1045.3 357.1 L1049.1 382.6 L1053.4 390.4 L1056.9 390.4 L1060.7 397.6 L1064.2 395.6 L1067.9 399.9 L1072.3 407.2 L1076.6 402.0 L1079.5 388.4 L1083.3 413.0 L1087.6 402.8 L1092.0 406.6 L1095.4 417.3 L1099.8 436.7 L1102.7 405.7 L1102.7 463.4 Z" fill="url(#cg)"/><path d="M860.8 427.5 L863.7 399.9 L868.0 385.5 L872.4 375.9 L876.7 392.1 L881.1 393.6 L887.4 421.1 L891.2 346.3 L895.6 355.0 L899.0 392.1 L903.7 399.9 L907.1 410.1 L910.6 425.1 L914.7 419.4 L918.7 427.5 L922.2 426.6 L926.6 422.2 L930.6 430.4 L941.0 410.1 L949.1 416.5 L953.5 327.5 L957.3 304.9 L960.7 320.3 L964.5 359.4 L968.6 378.2 L972.3 326.9 L976.7 334.2 L980.4 374.7 L983.0 366.6 L987.1 334.2 L991.4 350.7 L995.5 342.9 L999.3 310.1 L1003.3 345.8 L1008.0 300.0 L1011.4 226.9 L1014.3 163.8 L1017.8 221.1 L1021.6 253.0 L1025.9 310.0 L1026.5 335.6 L1030.8 342.9 L1037.5 384.6 L1041.8 386.9 L1045.3 357.1 L1049.1 382.6 L1053.4 390.4 L1056.9 390.4 L1060.7 397.6 L1064.2 395.6 L1067.9 399.9 L1072.3 407.2 L1076.6 402.0 L1079.5 388.4 L1083.3 413.0 L1087.6 402.8 L1092.0 406.6 L1095.4 417.3 L1099.8 436.7 L1102.7 405.7" fill="none" stroke="#b9c2c8" stroke-width="1"/><path d="M899.3 463.4 V467.4" stroke="#ddd" stroke-width="1"/><path d="M937.6 463.4 V467.4" stroke="#ddd" stroke-width="1"/><path d="M972.3 463.4 V467.4" stroke="#ddd" stroke-width="1"/><path d="M1010.6 463.4 V467.4" stroke="#ddd" stroke-width="1"/><path d="M1060.7 463.4 V467.4" stroke="#ddd" stroke-width="1"/><path d="M1099.2 463.4 V467.4" stroke="#ddd" stroke-width="1"/><text x="1108" y="155.7" font-family="DejaVu Sans,sans-serif" font-size="8.2" fill="#fff" stroke="#fff" stroke-width=".15">30.00</text><text x="1108" y="175.1" font-family="DejaVu Sans,sans-serif" font-size="8.2" fill="#fff" stroke="#fff" stroke-width=".15">29.00</text><text x="1108" y="194.6" font-family="DejaVu Sans,sans-serif" font-size="8.2" fill="#fff" stroke="#fff" stroke-width=".15">28.00</text><text x="1108" y="214.0" font-family="DejaVu Sans,sans-serif" font-size="8.2" fill="#fff" stroke="#fff" stroke-width=".15">27.00</text><text x="1108" y="233.5" font-family="DejaVu Sans,sans-serif" font-size="8.2" fill="#fff" stroke="#fff" stroke-width=".15">26.00</text><text x="1108" y="252.9" font-family="DejaVu Sans,sans-serif" font-size="8.2" fill="#fff" stroke="#fff" stroke-width=".15">25.00</text><text x="1108" y="272.4" font-family="DejaVu Sans,sans-serif" font-size="8.2" fill="#fff" stroke="#fff" stroke-width=".15">24.00</text><text x="1108" y="291.9" font-family="DejaVu Sans,sans-serif" font-size="8.2" fill="#fff" stroke="#fff" stroke-width=".15">23.00</text><text x="1108" y="311.3" font-family="DejaVu Sans,sans-serif" font-size="8.2" fill="#fff" stroke="#fff" stroke-width=".15">22.00</text><text x="1108" y="330.8" font-family="DejaVu Sans,sans-serif" font-size="8.2" fill="#fff" stroke="#fff" stroke-width=".15">21.00</text><text x="1108" y="350.2" font-family="DejaVu Sans,sans-serif" font-size="8.2" fill="#fff" stroke="#fff" stroke-width=".15">20.00</text><text x="1108" y="369.6" font-family="DejaVu Sans,sans-serif" font-size="8.2" fill="#fff" stroke="#fff" stroke-width=".15">19.00</text><text x="1108" y="389.1" font-family="DejaVu Sans,sans-serif" font-size="8.2" fill="#fff" stroke="#fff" stroke-width=".15">18.00</text><text x="1108" y="408.5" font-family="DejaVu Sans,sans-serif" font-size="8.2" fill="#fff" stroke="#fff" stroke-width=".15">17.00</text><text x="1108" y="428.0" font-family="DejaVu Sans,sans-serif" font-size="8.2" fill="#fff" stroke="#fff" stroke-width=".15">16.00</text><text x="1108" y="447.4" font-family="DejaVu Sans,sans-serif" font-size="8.2" fill="#fff" stroke="#fff" stroke-width=".15">15.00</text><text x="1108" y="466.9" font-family="DejaVu Sans,sans-serif" font-size="8.2" fill="#fff" stroke="#fff" stroke-width=".15">14.00</text><text x="861" y="150" letter-spacing="1.2" font-family="DejaVu Sans,sans-serif" font-size="8.2" fill="#fff" stroke="#fff" stroke-width=".15">VIX</text><text x="899" y="478" text-anchor="middle" font-family="DejaVu Sans,sans-serif" font-size="8.2" fill="#fff" stroke="#fff" stroke-width=".15">Feb</text><text x="972" y="478" text-anchor="middle" font-family="DejaVu Sans,sans-serif" font-size="8.2" fill="#fff" stroke="#fff" stroke-width=".15">Mar</text><text x="1060" y="478" text-anchor="middle" font-family="DejaVu Sans,sans-serif" font-size="8.2" fill="#fff" stroke="#fff" stroke-width=".15">Apr</text><text x="864" y="489" font-family="DejaVu Sans,sans-serif" font-size="8.2" fill="#fff" stroke="#fff" stroke-width=".15">April 18, 2011</text><text x="1126" y="489" text-anchor="end" font-family="DejaVu Sans,sans-serif" font-size="8.2" fill="#fff" stroke="#fff" stroke-width=".15"><tspan font-size="10.5" dy="0.6">©</tspan><tspan dy="-0.6"> quote</tspan><tspan fill="#4d82e0" stroke="#4d82e0">media</tspan>.com</text></svg>
<div class="a" style="left:855px;top:492px;width:279px;height:1px;background:#2b2b2b"></div>
<div class="a" style="left:875px;top:495px;width:243px;height:22.3px;background:#2a3042"></div>
<div class="a" style="left:857px;top:496px;width:17.3px;height:18.6px;background:#5d5b68;border:1px solid #85858f;border-bottom-color:#5f7fa8"></div>
<svg style="left:857px;top:496px" width="18" height="19" viewBox="0 0 18 19"><path d="M3 11.4 L9 6 V9 H14 V13.8 H9 V16.8 Z" fill="#2e2e36"/></svg>
<div class="a" style="left:877.7px;width:48.3px;background:#63708f;top:495.7px;height:19.4px;border-radius:0 0 2px 2px;line-height:23.2px;text-align:center;font-size:10px;text-indent:-3px;-webkit-text-stroke:.4px #fff">Today</div>
<div class="a" style="left:929.5px;width:53px;background:#63708f;top:495.7px;height:19.4px;border-radius:0 0 2px 2px;line-height:23.2px;text-align:center;font-size:10px;text-indent:-3px;-webkit-text-stroke:.4px #fff">5 Days</div>
<div class="a" style="left:986px;width:42.5px;background:#63708f;top:495.7px;height:19.4px;border-radius:0 0 2px 2px;line-height:23.2px;text-align:center;font-size:10px;text-indent:-2.5px;-webkit-text-stroke:.4px #fff">1 Mo</div>
<div class="a b" style="left:1032.5px;width:44.8px;background:linear-gradient(#e1842b 0,#e17a20 50%,#e57f22 62%,#ee9329 82%,#ee9329 100%);top:494.8px;height:19.5px;border-radius:1px 1px 2px 2px;line-height:20.3px;text-align:center;font-size:10px;text-indent:-2.5px;-webkit-text-stroke:.4px #fff">3 Mo</div>
<div class="a" style="left:1081.2px;width:36.6px;background:#63708f;top:495.7px;height:19.4px;border-radius:0 0 2px 2px;line-height:23.2px;text-align:center;font-size:10px;text-indent:2.5px;-webkit-text-stroke:.4px #fff">6 Mo</div>
<div class="a" style="left:1118.5px;top:496px;width:15.5px;height:18.6px;background:#b0aec8;border-left:1.5px solid #f4f4fa;border-top:1.3px solid #f4f4fa;border-bottom:1px solid #8fb0e0"></div>
<svg style="left:1118px;top:496px" width="16" height="19" viewBox="0 0 16 19"><path d="M15.2 11.3 L9.6 6 V9 H4.4 V13.7 H9.6 V16.7 Z" fill="#4a4a55"/></svg>
<div class="hdr" style="left:855px;top:518px;width:279px;height:24px"></div>
<svg style="left:860px;top:524px" width="13" height="13" viewBox="0 0 13 13"><path d="M6.5 0 V13 M0 6.5 H13" stroke="#1a1a1a" stroke-width="5"/><path d="M6.5 1.2 V11.8 M1.2 6.5 H11.8" stroke="#fff" stroke-width="2.6"/></svg>
<div class="rh" style="left:876px;top:522px">Hot List: ANY</div>
<svg style="left:1083.9px;top:524px" width="13" height="13" viewBox="0 0 13 13"><circle cx="6.5" cy="6.5" r="6" fill="#e6e6e6" stroke="#9a9a9a" stroke-width="1"/><text x="6.5" y="10" text-anchor="middle" font-family="Liberation Sans,sans-serif" font-weight="bold" font-size="10.5" fill="#505050" stroke="#505050" stroke-width=".5">?</text></svg>
<svg style="left:1100px;top:524.7px" width="16" height="13" viewBox="0 0 16 13"><rect x="0.5" y="4.9" width="10" height="7.4" fill="#f4f4f4" stroke="#8c8c8c"/><rect x="1" y="8.6" width="9" height="1.6" fill="#d0d0d0"/><rect x="4.5" y="0.5" width="10.2" height="8" fill="#f0f0f0" stroke="#858585"/><rect x="5" y="1" width="9.2" height="2.8" fill="#9e9e9e"/><rect x="5" y="3.8" width="9.2" height="1.2" fill="#c8c8c8"/></svg>
<div class="a" style="left:1117.8px;top:526.2px;width:0;height:0;border-left:6.1px solid transparent;border-right:6.1px solid transparent;border-top:7.6px solid #fff"></div>
<div class="hdr" style="left:855px;top:542px;width:279px;height:24px"></div>
<svg style="left:860px;top:548px" width="13" height="13" viewBox="0 0 13 13"><path d="M6.5 0 V13 M0 6.5 H13" stroke="#1a1a1a" stroke-width="5"/><path d="M6.5 1.2 V11.8 M1.2 6.5 H11.8" stroke="#fff" stroke-width="2.6"/></svg>
<div class="rh" style="left:876px;top:546px">Index Monitor: DJX</div>
<svg style="left:1083.9px;top:548px" width="13" height="13" viewBox="0 0 13 13"><circle cx="6.5" cy="6.5" r="6" fill="#e6e6e6" stroke="#9a9a9a" stroke-width="1"/><text x="6.5" y="10" text-anchor="middle" font-family="Liberation Sans,sans-serif" font-weight="bold" font-size="10.5" fill="#505050" stroke="#505050" stroke-width=".5">?</text></svg>
<svg style="left:1100px;top:548.7px" width="16" height="13" viewBox="0 0 16 13"><rect x="0.5" y="4.9" width="10" height="7.4" fill="#f4f4f4" stroke="#8c8c8c"/><rect x="1" y="8.6" width="9" height="1.6" fill="#d0d0d0"/><rect x="4.5" y="0.5" width="10.2" height="8" fill="#f0f0f0" stroke="#858585"/><rect x="5" y="1" width="9.2" height="2.8" fill="#9e9e9e"/><rect x="5" y="3.8" width="9.2" height="1.2" fill="#c8c8c8"/></svg>
<div class="a" style="left:1117.8px;top:550.2px;width:0;height:0;border-left:6.1px solid transparent;border-right:6.1px solid transparent;border-top:7.6px solid #fff"></div>
<div class="hdr" style="left:855px;top:566px;width:279px;height:24px"></div>
<svg style="left:860px;top:572px" width="13" height="13" viewBox="0 0 13 13"><path d="M6.5 0 V13 M0 6.5 H13" stroke="#1a1a1a" stroke-width="5"/><path d="M6.5 1.2 V11.8 M1.2 6.5 H11.8" stroke="#fff" stroke-width="2.6"/></svg>
<div class="rh" style="left:876px;top:570px">Watchlist: biotech</div>
<svg style="left:1083.9px;top:572px" width="13" height="13" viewBox="0 0 13 13"><circle cx="6.5" cy="6.5" r="6" fill="#e6e6e6" stroke="#9a9a9a" stroke-width="1"/><text x="6.5" y="10" text-anchor="middle" font-family="Liberation Sans,sans-serif" font-weight="bold" font-size="10.5" fill="#505050" stroke="#505050" stroke-width=".5">?</text></svg>
<svg style="left:1100px;top:572.7px" width="16" height="13" viewBox="0 0 16 13"><rect x="0.5" y="4.9" width="10" height="7.4" fill="#f4f4f4" stroke="#8c8c8c"/><rect x="1" y="8.6" width="9" height="1.6" fill="#d0d0d0"/><rect x="4.5" y="0.5" width="10.2" height="8" fill="#f0f0f0" stroke="#858585"/><rect x="5" y="1" width="9.2" height="2.8" fill="#9e9e9e"/><rect x="5" y="3.8" width="9.2" height="1.2" fill="#c8c8c8"/></svg>
<div class="a" style="left:1117.8px;top:574.2px;width:0;height:0;border-left:6.1px solid transparent;border-right:6.1px solid transparent;border-top:7.6px solid #fff"></div>
</body></html>
